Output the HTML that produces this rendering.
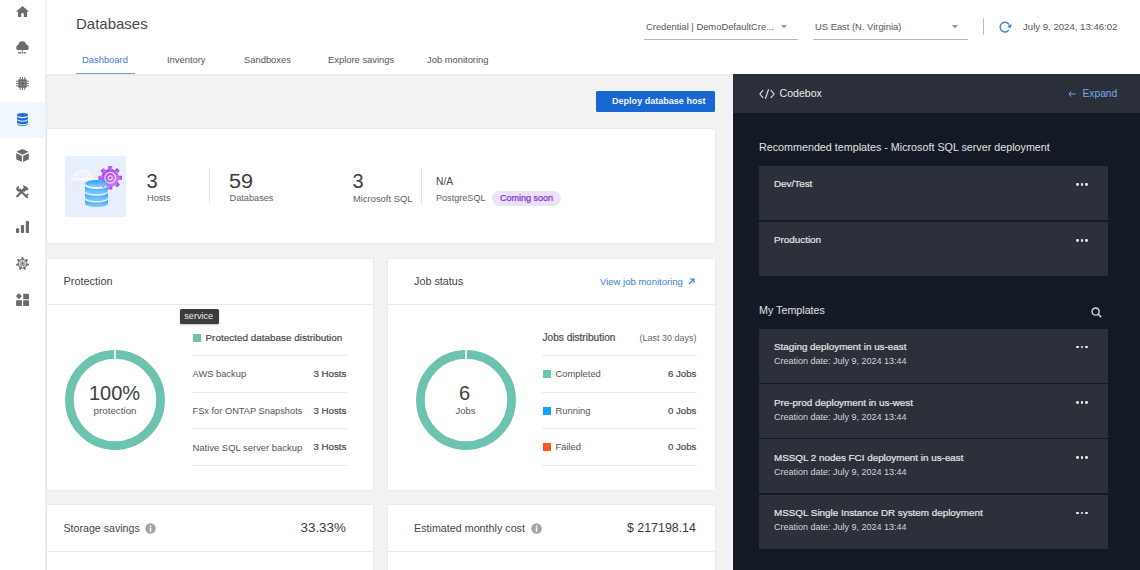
<!DOCTYPE html>
<html><head><meta charset="utf-8">
<style>
*{box-sizing:border-box;margin:0;padding:0}
html,body{width:1140px;height:570px;overflow:hidden;background:#fff;font-family:"Liberation Sans",sans-serif;color:#444}
.a{position:absolute;white-space:nowrap;line-height:1}
#side{position:absolute;left:0;top:0;width:46px;height:570px;background:#fff;border-right:1px solid #eeeeee;box-shadow:1px 0 3px rgba(0,0,0,.045);z-index:5}
#side .act{position:absolute;left:0;top:102px;width:45px;height:36px;background:#f0f7fd}
.ic{position:absolute;left:16px;width:13px;height:13px;fill:#6b6b6b}
#main{position:absolute;left:46px;top:74px;width:687px;height:496px;background:#f3f3f3}
.card{position:absolute;background:#fff;box-shadow:0 0 2.5px rgba(0,0,0,.09)}
.hr{position:absolute;height:1px;background:#e8e8e8}
#code{position:absolute;left:733px;top:74px;width:407px;height:496px;background:#141a25}
#codeh{position:absolute;left:733px;top:74px;width:407px;height:39px;background:#2a2f3a}
.tpl{position:absolute;left:759px;width:349px;height:54px;background:#2b303b}
.tpl .t{position:absolute;left:15px;top:13.4px;font-size:9.85px;color:#e6e6e6;-webkit-text-stroke:.2px #e6e6e6;white-space:nowrap;line-height:1}
.tpl .d{position:absolute;left:15px;top:28.7px;font-size:9px;color:#d5d5d5;white-space:nowrap;line-height:1}
.dots{position:absolute;left:317px;top:17px;width:12px;height:3px}
.dots i{position:absolute;top:0;width:2.8px;height:2.8px;border-radius:50%;background:#f0f0f0}
.sq{position:absolute;width:8px;height:8px}
</style></head><body>

<!-- sidebar -->
<div id="side">
  <div class="act"></div>
  <!-- home -->
  <svg class="ic" style="top:4.5px" viewBox="2 3 20 17"><path d="M10 20v-6h4v6h5v-8h3L12 3 2 12h3v8z"/></svg>
  <!-- cloud network -->
  <svg class="ic" style="top:40.5px" viewBox="0 0 13 13"><circle cx="3.3" cy="6.3" r="2.9"/><circle cx="6.3" cy="4" r="3.8"/><circle cx="9.7" cy="6.3" r="2.8"/><rect x="0.4" y="5.8" width="12" height="3.3" rx="1.6"/><rect x="5.85" y="8.5" width="1" height="2.8"/><rect x="2.1" y="11.1" width="7.8" height="1.4"/><circle cx="6.35" cy="11.8" r="1.3" fill="#fff"/><circle cx="6.35" cy="11.8" r=".8"/></svg>
  <!-- chip -->
  <svg class="ic" style="top:77px" viewBox="0 0 13 13"><rect x="2.3" y="2.3" width="8.4" height="8.4" rx=".8"/><rect x="4.4" y="4.4" width="4.2" height="4.2" fill="none" stroke="#8d8d8d" stroke-width=".8"/><g><rect x="3.7" y="0" width="1" height="2.6"/><rect x="6" y="0" width="1" height="2.6"/><rect x="8.3" y="0" width="1" height="2.6"/><rect x="3.7" y="10.4" width="1" height="2.6"/><rect x="6" y="10.4" width="1" height="2.6"/><rect x="8.3" y="10.4" width="1" height="2.6"/><rect y="3.7" x="0" height="1" width="2.6"/><rect y="6" x="0" height="1" width="2.6"/><rect y="8.3" x="0" height="1" width="2.6"/><rect y="3.7" x="10.4" height="1" width="2.6"/><rect y="6" x="10.4" height="1" width="2.6"/><rect y="8.3" x="10.4" height="1" width="2.6"/></g></svg>
  <!-- database active -->
  <svg class="ic" style="left:17px;width:11px;top:112.5px" viewBox="0 0 11 13"><g fill="#1f6bd3"><ellipse cx="5.5" cy="2" rx="5.5" ry="1.9"/><path d="M0 3.2c0 1.1 2.5 2 5.5 2s5.5-.9 5.5-2V5.8c0 1.1-2.5 2-5.5 2S0 6.9 0 5.8z"/><path d="M0 6.8c0 1.1 2.5 2 5.5 2s5.5-.9 5.5-2V9.2c0 1.1-2.5 2-5.5 2S0 10.3 0 9.2z"/><path d="M0 10.2c0 1.1 2.5 2 5.5 2s5.5-.9 5.5-2V11c0 1.1-2.5 2-5.5 2S0 12.1 0 11z"/></g></svg>
  <!-- cube -->
  <svg class="ic" style="top:149px" viewBox="0 0 13 13.4"><path d="M6.5 0L12.8 2.9 6.5 5.8 0.2 2.9z"/><path d="M0 4.3L5.8 7V13.4L0 10.6z"/><path d="M7.2 7L13 4.3V10.6L7.2 13.4z"/></svg>
  <!-- tools -->
  <svg class="ic" style="top:185px" viewBox="0 0 13 13"><path d="M1.2 11.2L8.3 4.1" stroke="#6b6b6b" stroke-width="2.2" stroke-linecap="round"/><path d="M6.5 0.6C8.6 0.4 11.2 1.6 12.6 4.3L11.3 5.6 10.5 5 8.4 7 6 4.6 7.9 2.8z"/><path d="M3.8 5.2L10.9 12" stroke="#6b6b6b" stroke-width="2.2" stroke-linecap="round"/><path d="M0.3 2.8L2.1 1 3.4 2.3 2.5 3.2 3.6 4.3 4.5 3.4 5.8 4.7 4 6.5C2.6 7 0.9 6.3 0.3 4.6z"/><path d="M9 10.8l2.6-2.6 1.2 1.3-2.6 2.6z"/></svg>
  <!-- bars -->
  <svg class="ic" style="top:221px;height:12px" viewBox="0 0 13 12"><rect x="0" y="7.3" width="3.2" height="4.7" rx=".8"/><rect x="4.9" y="4" width="3.2" height="8" rx=".8"/><rect x="9.8" y="0" width="3.2" height="12" rx=".8"/></svg>
  <!-- helm/star -->
  <svg class="ic" style="top:257.3px" viewBox="0 0 13 13"><polygon points="6.50,1.30 10.64,3.30 11.67,7.78 8.80,11.38 4.20,11.38 1.33,7.78 2.36,3.30"/><circle cx="6.50" cy="1.00" r="1"/><circle cx="10.88" cy="3.11" r="1"/><circle cx="11.96" cy="7.85" r="1"/><circle cx="8.93" cy="11.65" r="1"/><circle cx="4.07" cy="11.65" r="1"/><circle cx="1.04" cy="7.85" r="1"/><circle cx="2.12" cy="3.11" r="1"/><circle cx="6.5" cy="6.6" r="3.1" fill="none" stroke="#fff" stroke-width=".8"/><g stroke="#fff" stroke-width=".75"><path d="M6.98 5.61L8.37 2.73"/><path d="M7.57 6.36L10.69 5.64"/><path d="M7.36 7.29L9.86 9.28"/><path d="M6.50 7.70L6.50 10.90"/><path d="M5.64 7.29L3.14 9.28"/><path d="M5.43 6.36L2.31 5.64"/><path d="M6.02 5.61L4.63 2.73"/></g></svg>
  <!-- widgets -->
  <svg class="ic" style="top:292.8px" viewBox="0 0 13 13"><path d="M2.9 0.1L5.9 3.2 2.9 6.3-0.1 3.2z"/><rect x="7.2" y="0.7" width="5.8" height="5.6" rx=".5"/><rect x="0.1" y="7.3" width="5.8" height="5.7" rx=".5"/><rect x="7.2" y="7.3" width="5.8" height="5.7" rx=".5"/></svg>
</div>

<!-- header -->
<div class="a" style="left:76px;top:15.7px;font-size:15px;color:#474747">Databases</div>
<div class="a" style="left:82px;top:55px;font-size:9.4px;color:#3a7bd5">Dashboard</div>
<div class="a" style="left:76px;top:72.5px;width:59px;height:1.5px;background:#6a9fe2"></div>
<div class="a" style="left:167px;top:55px;font-size:9.4px;color:#555">Inventory</div>
<div class="a" style="left:244px;top:55px;font-size:9.4px;color:#555">Sandboxes</div>
<div class="a" style="left:328px;top:55px;font-size:9.4px;color:#555">Explore savings</div>
<div class="a" style="left:427px;top:55px;font-size:9.4px;color:#555">Job monitoring</div>

<div class="a" style="left:646px;top:22px;font-size:9.4px;color:#555">Credential | DemoDefaultCre...</div>
<svg class="a" style="left:781px;top:24.5px" width="6" height="3.5" viewBox="0 0 6 3.5"><path d="M0 0h6L3 3.5z" fill="#999"/></svg>
<div class="a" style="left:644px;top:38.5px;width:154px;height:1px;background:#b8b8b8"></div>
<div class="a" style="left:815px;top:22px;font-size:9.4px;color:#555">US East (N. Virginia)</div>
<svg class="a" style="left:952px;top:24.5px" width="6" height="3.5" viewBox="0 0 6 3.5"><path d="M0 0h6L3 3.5z" fill="#999"/></svg>
<div class="a" style="left:813px;top:38.5px;width:155px;height:1px;background:#b8b8b8"></div>
<div class="a" style="left:983px;top:18px;width:1px;height:17px;background:#bdbdbd"></div>
<svg class="a" style="left:999px;top:21px" width="14" height="13" viewBox="0 0 14 13"><path d="M10.2 3.6A4.9 4.9 0 1 0 9.8 9.3" fill="none" stroke="#3d7ddb" stroke-width="1.4"/><path d="M8.2 4.9L12.9 3.3 11.4 7.6z" fill="#3d7ddb"/></svg>
<div class="a" style="left:1023px;top:22px;font-size:9.6px;color:#555">July 9, 2024, 13:46:02</div>
<div class="a" style="left:46px;top:74px;width:687px;height:3px;background:linear-gradient(rgba(0,0,0,.04),rgba(0,0,0,0))"></div>

<!-- main gray -->
<div id="main"></div>
<div class="a" style="left:46px;top:74px;width:687px;height:3px;background:linear-gradient(rgba(0,0,0,.035),rgba(0,0,0,0))"></div>

<!-- deploy button -->
<div class="a" style="left:596px;top:91px;width:119px;height:20.5px;background:#1766d1;border-radius:1.5px"></div>
<div class="a" style="left:612px;top:97px;font-size:9.05px;font-weight:700;color:#f4f7fc">Deploy database host</div>

<!-- stats card -->
<div class="card" style="left:47px;top:129px;width:668px;height:113.5px"></div>
<div class="a" style="left:64.5px;top:155.5px;width:61.3px;height:61.3px;background:#e8effc;border-radius:2px"></div>
<svg class="a" style="left:64.5px;top:155.5px" width="62" height="62" viewBox="0 0 62 62">
  <defs>
    <linearGradient id="cl" x1="0" y1="0" x2="0" y2="1"><stop offset="0" stop-color="#fbfbfe"/><stop offset="1" stop-color="#e4e6ef"/></linearGradient>
    <linearGradient id="db" x1="0" y1="0" x2="0" y2="1"><stop offset="0" stop-color="#22a3f6"/><stop offset="1" stop-color="#8ccafb"/></linearGradient>
    <linearGradient id="gr" x1="0" y1="0" x2="1" y2="1"><stop offset="0" stop-color="#a034ea"/><stop offset="1" stop-color="#cf8ef2"/></linearGradient>
  </defs>
  <g fill="url(#cl)"><circle cx="13" cy="22" r="5.5"/><circle cx="19.5" cy="19.5" r="6.5"/><circle cx="25" cy="23.5" r="4.5"/><rect x="6" y="22" width="24" height="6.5" rx="3.2"/></g>
  <g transform="translate(45.2,21.8)" fill="url(#gr)"><circle r="9"/><rect x="-2.1" y="-11.8" width="4.2" height="4.2" rx=".9" transform="rotate(0)"/><rect x="-2.1" y="-11.8" width="4.2" height="4.2" rx=".9" transform="rotate(45)"/><rect x="-2.1" y="-11.8" width="4.2" height="4.2" rx=".9" transform="rotate(90)"/><rect x="-2.1" y="-11.8" width="4.2" height="4.2" rx=".9" transform="rotate(135)"/><rect x="-2.1" y="-11.8" width="4.2" height="4.2" rx=".9" transform="rotate(180)"/><rect x="-2.1" y="-11.8" width="4.2" height="4.2" rx=".9" transform="rotate(225)"/><rect x="-2.1" y="-11.8" width="4.2" height="4.2" rx=".9" transform="rotate(270)"/><rect x="-2.1" y="-11.8" width="4.2" height="4.2" rx=".9" transform="rotate(315)"/></g>
  <circle cx="45.2" cy="21.8" r="5.4" fill="none" stroke="#f1defc" stroke-width="1.2"/>
  <circle cx="45.2" cy="21.8" r="2.1" fill="none" stroke="#f1defc" stroke-width="1.1"/>
  <g fill="url(#db)">
    <ellipse cx="31.5" cy="27.5" rx="11.5" ry="3.5"/>
    <path d="M20 29.5c0 2 5.2 3.6 11.5 3.6s11.5-1.6 11.5-3.6v5.2c0 2-5.2 3.6-11.5 3.6S20 36.7 20 34.7z"/>
    <path d="M20 36.2c0 2 5.2 3.6 11.5 3.6s11.5-1.6 11.5-3.6v5.2c0 2-5.2 3.6-11.5 3.6S20 43.4 20 41.4z"/>
    <path d="M20 42.9c0 2 5.2 3.6 11.5 3.6s11.5-1.6 11.5-3.6v4.6c0 2-5.2 3.6-11.5 3.6S20 49.5 20 47.5z"/>
  </g>
</svg>
<div class="a" style="left:146.6px;top:171.1px;font-size:20px;color:#3c3c3c">3</div>
<div class="a" style="left:147px;top:194px;font-size:9.2px;color:#616161">Hosts</div>
<div class="a" style="left:208.5px;top:168px;width:1px;height:36px;background:#e3e3e3"></div>
<div class="a" style="left:229.3px;top:171.1px;font-size:20px;color:#3c3c3c;transform:scaleX(1.08);transform-origin:0 0">59</div>
<div class="a" style="left:229.5px;top:194px;font-size:9.2px;color:#616161">Databases</div>
<div class="a" style="left:352.6px;top:171.1px;font-size:20px;color:#3c3c3c">3</div>
<div class="a" style="left:353px;top:194px;font-size:9.4px;color:#616161">Microsoft SQL</div>
<div class="a" style="left:420.5px;top:168px;width:1px;height:36px;background:#e3e3e3"></div>
<div class="a" style="left:436px;top:177.3px;font-size:10.3px;color:#444">N/A</div>
<div class="a" style="left:436px;top:194px;font-size:9.1px;color:#616161">PostgreSQL</div>
<div class="a" style="left:492px;top:190.5px;width:69px;height:15px;background:#ece0fb;border-radius:7.5px"></div>
<div class="a" style="left:500px;top:193.6px;font-size:9px;color:#7b40c4;-webkit-text-stroke:.25px #7b40c4">Coming soon</div>

<!-- protection card -->
<div class="card" style="left:47px;top:258.5px;width:325.5px;height:231px"></div>
<div class="a" style="left:63.5px;top:276px;font-size:10.9px;color:#444">Protection</div>
<div class="hr" style="left:47px;top:304px;width:325.5px"></div>
<svg class="a" style="left:64px;top:349px" width="102" height="102" viewBox="0 0 102 102"><circle cx="51" cy="51" r="45.6" fill="none" stroke="#6cc4b0" stroke-width="8.7"/><rect x="50.2" y="0" width="1.6" height="10" fill="#fff"/></svg>
<div class="a" style="left:89px;top:382.5px;font-size:20px;color:#3e3e3e">100%</div>
<div class="a" style="left:93.5px;top:406px;font-size:9.8px;color:#555">protection</div>
<div class="sq" style="left:192.5px;top:333.8px;background:#6cc4b0"></div>
<div class="a" style="left:205.5px;top:332.7px;font-size:9.94px;color:#4a4a4a;-webkit-text-stroke:.2px #4a4a4a">Protected database distribution</div>
<div class="hr" style="left:192px;top:355px;width:155px"></div>
<div class="a" style="left:192.5px;top:370px;font-size:9.33px;color:#555">AWS backup</div>
<div class="a" style="left:313.4px;top:369.2px;font-size:9.73px;color:#4a4a4a;-webkit-text-stroke:.2px #4a4a4a">3 Hosts</div>
<div class="hr" style="left:192px;top:392px;width:155px"></div>
<div class="a" style="left:192.5px;top:406.5px;font-size:9.28px;color:#555">FSx for ONTAP Snapshots</div>
<div class="a" style="left:313.4px;top:405.7px;font-size:9.73px;color:#4a4a4a;-webkit-text-stroke:.2px #4a4a4a">3 Hosts</div>
<div class="hr" style="left:192px;top:428px;width:155px"></div>
<div class="a" style="left:192.5px;top:443px;font-size:9.45px;color:#555">Native SQL server backup</div>
<div class="a" style="left:313.4px;top:442.2px;font-size:9.73px;color:#4a4a4a;-webkit-text-stroke:.2px #4a4a4a">3 Hosts</div>
<div class="hr" style="left:192px;top:465px;width:155px"></div>
<!-- tooltip -->
<div class="a" style="left:180px;top:309.3px;width:39px;height:14.5px;background:#3c3c3c;border-radius:1.5px;box-shadow:0 1px 2px rgba(0,0,0,.25)"></div>
<div class="a" style="left:184.3px;top:312px;font-size:9.1px;color:#eee">service</div>

<!-- job status card -->
<div class="card" style="left:388px;top:258.5px;width:327px;height:231px"></div>
<div class="a" style="left:414px;top:276px;font-size:10.8px;color:#444">Job status</div>
<div class="a" style="left:600px;top:276.5px;font-size:9.53px;color:#3a7bd5">View job monitoring</div>
<svg class="a" style="left:688px;top:277.5px" width="7" height="7" viewBox="0 0 7 7"><path d="M1 6L6 1M2 1h4v4" fill="none" stroke="#3a7bd5" stroke-width="1.1"/></svg>
<div class="hr" style="left:388px;top:304px;width:327px"></div>
<svg class="a" style="left:414.5px;top:349px" width="102" height="102" viewBox="0 0 102 102"><circle cx="51" cy="51" r="45.6" fill="none" stroke="#6cc4b0" stroke-width="8.7"/><rect x="50.2" y="0" width="1.6" height="10" fill="#fff"/></svg>
<div class="a" style="left:459px;top:382.5px;font-size:20px;color:#3e3e3e">6</div>
<div class="a" style="left:455.5px;top:406px;font-size:9.47px;color:#555">Jobs</div>
<div class="a" style="left:542.5px;top:332.7px;font-size:10.1px;color:#4a4a4a;-webkit-text-stroke:.2px #4a4a4a">Jobs distribution</div>
<div class="a" style="left:639.5px;top:334px;font-size:8.99px;color:#666">(Last 30 days)</div>
<div class="hr" style="left:542px;top:355px;width:155px"></div>
<div class="sq" style="left:542.5px;top:370px;background:#6cc4b0"></div>
<div class="a" style="left:555.5px;top:369.3px;font-size:9.4px;color:#555">Completed</div>
<div class="a" style="left:668px;top:369.2px;font-size:9.64px;color:#4a4a4a;-webkit-text-stroke:.2px #4a4a4a">6 Jobs</div>
<div class="hr" style="left:542px;top:392px;width:155px"></div>
<div class="sq" style="left:542.5px;top:406.5px;background:#1aa1f5"></div>
<div class="a" style="left:555.5px;top:405.8px;font-size:9.4px;color:#555">Running</div>
<div class="a" style="left:668px;top:405.7px;font-size:9.64px;color:#4a4a4a;-webkit-text-stroke:.2px #4a4a4a">0 Jobs</div>
<div class="hr" style="left:542px;top:428px;width:155px"></div>
<div class="sq" style="left:542.5px;top:443px;background:#f7591c"></div>
<div class="a" style="left:555.5px;top:442.3px;font-size:9.4px;color:#555">Failed</div>
<div class="a" style="left:668px;top:442.2px;font-size:9.64px;color:#4a4a4a;-webkit-text-stroke:.2px #4a4a4a">0 Jobs</div>
<div class="hr" style="left:542px;top:465px;width:155px"></div>

<!-- bottom cards -->
<div class="card" style="left:47px;top:504.5px;width:325.5px;height:70px"></div>
<div class="a" style="left:63.5px;top:523px;font-size:10.64px;color:#444">Storage savings</div>
<svg class="a" style="left:145px;top:523px" width="11" height="11" viewBox="0 0 11 11"><circle cx="5.5" cy="5.5" r="5.3" fill="#a5a5a5"/><rect x="4.8" y="4.5" width="1.5" height="4.2" fill="#fff"/><circle cx="5.55" cy="3" r=".85" fill="#fff"/></svg>
<div class="a" style="left:300.5px;top:521px;font-size:13.4px;color:#3a3a3a">33.33%</div>
<div class="hr" style="left:47px;top:550.5px;width:325.5px"></div>
<div class="card" style="left:388px;top:504.5px;width:327px;height:70px"></div>
<div class="a" style="left:414px;top:523px;font-size:10.74px;color:#444">Estimated monthly cost</div>
<svg class="a" style="left:531px;top:523px" width="11" height="11" viewBox="0 0 11 11"><circle cx="5.5" cy="5.5" r="5.3" fill="#a5a5a5"/><rect x="4.8" y="4.5" width="1.5" height="4.2" fill="#fff"/><circle cx="5.55" cy="3" r=".85" fill="#fff"/></svg>
<div class="a" style="left:627px;top:521.7px;font-size:12.4px;color:#3a3a3a">$ 217198.14</div>
<div class="hr" style="left:388px;top:550.5px;width:327px"></div>

<!-- codebox -->
<div id="code"></div>
<div id="codeh"></div>
<svg class="a" style="left:758.5px;top:89px" width="16" height="10" viewBox="0 0 16 10"><path d="M4.2 1.2L0.9 5 4.2 8.8M11.8 1.2L15.1 5 11.8 8.8M9.6 0.3L6.4 9.7" fill="none" stroke="#e6e6e6" stroke-width="1.1"/></svg>
<div class="a" style="left:779.5px;top:87.8px;font-size:10.57px;color:#ececec">Codebox</div>
<svg class="a" style="left:1068px;top:90.5px" width="8" height="6" viewBox="0 0 8 6"><path d="M7.6 3H1M3.4 0.6L0.9 3 3.4 5.4" fill="none" stroke="#6f9fe6" stroke-width="1"/></svg>
<div class="a" style="left:1082.5px;top:88.5px;font-size:10.26px;color:#7ba7ea">Expand</div>
<div class="a" style="left:759px;top:141.6px;font-size:10.74px;color:#e2e2e2">Recommended templates - Microsoft SQL server deployment</div>

<div class="tpl" style="top:166px;height:54px"><div class="t">Dev/Test</div><div class="dots"><i style="left:0"></i><i style="left:4.5px"></i><i style="left:9px"></i></div></div>
<div class="tpl" style="top:221.8px;height:53.8px"><div class="t">Production</div><div class="dots"><i style="left:0"></i><i style="left:4.5px"></i><i style="left:9px"></i></div></div>

<div class="a" style="left:759px;top:305px;font-size:10.73px;color:#e2e2e2">My Templates</div>
<svg class="a" style="left:1091px;top:307px" width="11" height="11" viewBox="0 0 11 11"><circle cx="4.6" cy="4.6" r="3.6" fill="none" stroke="#dcdcdc" stroke-width="1.3"/><path d="M7.3 7.3L10.3 10.3" stroke="#dcdcdc" stroke-width="1.5"/></svg>

<div class="tpl" style="top:328.6px"><div class="t">Staging deployment in us-east</div><div class="d">Creation date: July 9, 2024 13:44</div><div class="dots"><i style="left:0"></i><i style="left:4.5px"></i><i style="left:9px"></i></div></div>
<div class="tpl" style="top:384.2px"><div class="t">Pre-prod deployment in us-west</div><div class="d">Creation date: July 9, 2024 13:44</div><div class="dots"><i style="left:0"></i><i style="left:4.5px"></i><i style="left:9px"></i></div></div>
<div class="tpl" style="top:439.4px"><div class="t">MSSQL 2 nodes FCI deployment in us-east</div><div class="d">Creation date: July 9, 2024 13:44</div><div class="dots"><i style="left:0"></i><i style="left:4.5px"></i><i style="left:9px"></i></div></div>
<div class="tpl" style="top:494.5px"><div class="t">MSSQL Single Instance DR system deployment</div><div class="d">Creation date: July 9, 2024 13:44</div><div class="dots"><i style="left:0"></i><i style="left:4.5px"></i><i style="left:9px"></i></div></div>

</body></html>
